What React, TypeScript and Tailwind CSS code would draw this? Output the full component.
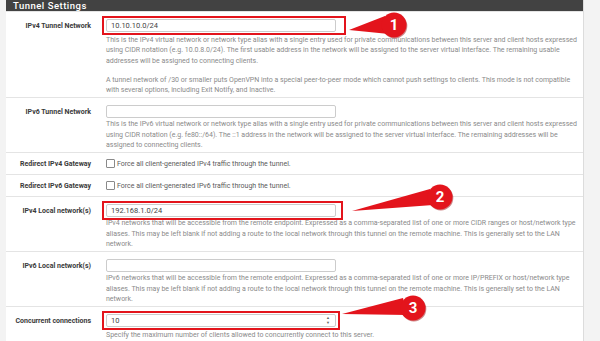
import React from 'react';

type RowProps = {
  label: string;
  children: React.ReactNode;
  compact?: boolean;
};

const Row: React.FC<RowProps> = ({ label, children, compact }) => (
  <div className="flex border-t border-[#e4e4e4]">
    <div
      className={
        compact
          ? 'w-[91px] shrink-0 pr-[6px] pt-[6px] text-right text-[7px] font-bold leading-[10px] text-[#3a3a3a]'
          : 'w-[91px] shrink-0 pr-[6px] pt-[9px] text-right text-[7px] font-bold leading-[10px] text-[#3a3a3a]'
      }
    >
      {label}
    </div>
    <div className={compact ? 'flex-1 pl-[9px] py-[5px]' : 'flex-1 pl-[9px] pt-[7px] pb-[2px]'}>{children}</div>
  </div>
);

type FieldProps = {
  value?: string;
  boxRight?: string;
  highlight?: boolean;
  spinner?: boolean;
};

const Field: React.FC<FieldProps> = ({ value = '', highlight, boxRight = '-right-[10px]', spinner }) => (
  <div className="relative w-[230px]">
    <input
      readOnly
      defaultValue={value}
      className="block h-[13px] w-[230px] rounded-[2px] border border-[#cccccc] bg-white px-[4px] text-[7.5px] text-[#444] outline-none"
    />
    {spinner && (
      <div className="absolute right-[6px] top-[2px] flex flex-col items-center text-[4px] leading-[4.5px] text-[#666]">
        <span>▲</span>
        <span>▼</span>
      </div>
    )}
    {highlight && (
      <span className={'pointer-events-none absolute -left-[4px] -top-[3px] -bottom-[3px] border-2 border-[#e3141c] ' + boxRight} />
    )}
  </div>
);

const Help: React.FC<{ lines: string[]; className?: string }> = ({ lines, className = 'mt-[1px]' }) => (
  <p className={'whitespace-nowrap text-[7px] leading-[10.3px] text-[#8a8a8a] ' + className}>
    {lines.map((l, i) => (
      <React.Fragment key={i}>
        {l}
        {i < lines.length - 1 && <br />}
      </React.Fragment>
    ))}
  </p>
);

const Check: React.FC<{ text: string }> = ({ text }) => (
  <div className="flex h-[11px] items-center gap-[2px]">
    <span className="h-[9px] w-[9px] rounded-[1px] border border-[#8a8a8a] bg-white" />
    <span className="text-[7px] leading-[10px] text-[#5a5a5a]">{text}</span>
  </div>
);

const Callout: React.FC<{ n: string; cx: number; cy: number; tri: string }> = ({ n, cx, cy, tri }) => (
  <g>
    <polygon points={tri} fill="#e3141c" />
    <circle cx={cx + 0.8} cy={cy + 1} r={12.5} fill="#9b0b10" opacity={0.5} />
    <circle cx={cx} cy={cy} r={12.5} fill="#e3141c" />
    <text
      x={cx}
      y={cy + 5}
      textAnchor="middle"
      fontFamily="Roboto, sans-serif"
      fontWeight={700}
      fontSize={15}
      fill="#ffffff"
    >
      {n}
    </text>
  </g>
);

const App: React.FC = () => {
  return (
    <div className="relative h-[341px] w-[600px] overflow-hidden bg-[#f3f3f3] pl-[6px] font-[Roboto,sans-serif]">
      <div className="w-[578px] border-r border-[#dcdcdc] bg-white">
        <div className="h-[11px] bg-[#424242] pl-[7px] text-[9.5px] font-medium leading-[11px] tracking-[0.5px] text-white">
          Tunnel Settings
        </div>

        <Row label="IPv4 Tunnel Network">
          <Field value="10.10.10.0/24" highlight />
          <Help
            className="mt-[3px]"
            lines={[
              'This is the IPv4 virtual network or network type alias with a single entry used for private communications between this server and client hosts expressed',
              'using CIDR notation (e.g. 10.0.8.0/24). The first usable address in the network will be assigned to the server virtual interface. The remaining usable',
              'addresses will be assigned to connecting clients.',
            ]}
          />
          <Help
            className="mt-[9px]"
            lines={[
              'A tunnel network of /30 or smaller puts OpenVPN into a special peer-to-peer mode which cannot push settings to clients. This mode is not compatible',
              'with several options, including Exit Notify, and Inactive.',
            ]}
          />
        </Row>

        <Row label="IPv6 Tunnel Network">
          <Field />
          <Help
            lines={[
              'This is the IPv6 virtual network or network type alias with a single entry used for private communications between this server and client hosts expressed',
              'using CIDR notation (e.g. fe80::/64). The ::1 address in the network will be assigned to the server virtual interface. The remaining addresses will be',
              'assigned to connecting clients.',
            ]}
          />
        </Row>

        <Row label="Redirect IPv4 Gateway" compact>
          <Check text="Force all client-generated IPv4 traffic through the tunnel." />
        </Row>

        <Row label="Redirect IPv6 Gateway" compact>
          <Check text="Force all client-generated IPv6 traffic through the tunnel." />
        </Row>

        <Row label="IPv4 Local network(s)">
          <Field value="192.168.1.0/24" highlight boxRight="-right-[7px]" />
          <Help
            lines={[
              'IPv4 networks that will be accessible from the remote endpoint. Expressed as a comma-separated list of one or more CIDR ranges or host/network type',
              'aliases. This may be left blank if not adding a route to the local network through this tunnel on the remote machine. This is generally set to the LAN',
              'network.',
            ]}
          />
        </Row>

        <Row label="IPv6 Local network(s)">
          <Field />
          <Help
            lines={[
              'IPv6 networks that will be accessible from the remote endpoint. Expressed as a comma-separated list of one or more IP/PREFIX or host/network type',
              'aliases. This may be left blank if not adding a route to the local network through this tunnel on the remote machine. This is generally set to the LAN',
              'network.',
            ]}
          />
        </Row>

        <Row label="Concurrent connections">
          <Field value="10" highlight spinner boxRight="-right-[4px]" />
          <Help
            className="mt-[3px]"
            lines={['Specify the maximum number of clients allowed to concurrently connect to this server.']}
          />
        </Row>
      </div>

      {/* annotation callouts */}
      <svg className="pointer-events-none absolute left-0 top-0" width={600} height={341} viewBox="0 0 600 341">
        <Callout n="1" cx={394} cy={25} tri="349,30 385,16 389,34" />
        <Callout n="2" cx={440} cy={197} tri="352,211 430,189 433,205" />
        <Callout n="3" cx={413} cy={308} tri="342,314 403,298 407,315" />
      </svg>
    </div>
  );
};

export default App;
